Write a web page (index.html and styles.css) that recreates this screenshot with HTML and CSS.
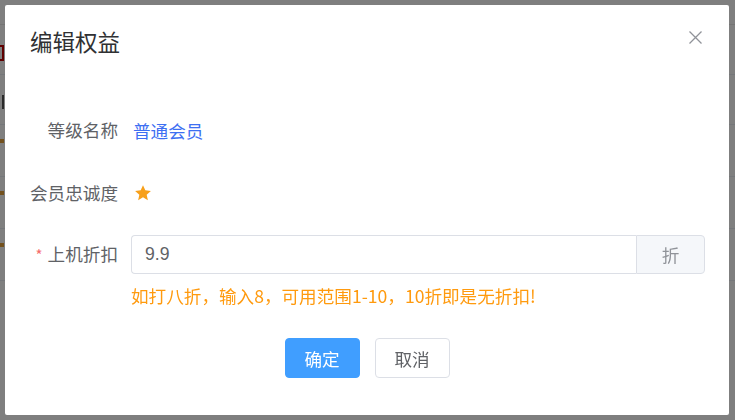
FILE: index.html
```html
<!DOCTYPE html>
<html lang="zh">
<head>
<meta charset="utf-8">
<title>编辑权益</title>
<link rel="stylesheet" href="styles.css">
</head>
<body>
<div class="page">
  <div class="page-top"></div>
  <div class="page-row"><span class="bg-frag red"></span></div>
  <div class="page-row"><span class="bg-frag dark"></span></div>
  <div class="page-row short"><span class="bg-mark"></span></div>
  <div class="page-row short"><span class="bg-mark"></span></div>
  <div class="page-row short"><span class="bg-mark"></span></div>
</div>
<div class="mask">
  <div class="dialog">
    <div class="dialog-header">
      <span class="dialog-title">编辑权益</span>
      <button class="dialog-close" aria-label="关闭">
        <svg width="13" height="13" viewBox="0 0 13 13"><path d="M0.5 0.5L12.5 12.5M12.5 0.5L0.5 12.5" stroke="#909399" stroke-width="1.3" fill="none"/></svg>
      </button>
    </div>
    <div class="dialog-body">
      <div class="form-item first">
        <label class="form-label">等级名称</label>
        <div class="form-content"><span class="level-name">普通会员</span></div>
      </div>
      <div class="form-item second">
        <label class="form-label">会员忠诚度</label>
        <div class="form-content">
          <svg class="star" width="18" height="18" viewBox="0 0 24 24"><path d="M12 1.5l3.1 6.9 7.4.8-5.6 5 1.6 7.4L12 17.8l-6.5 3.8 1.6-7.4-5.6-5 7.4-.8z" fill="#f7a01b"/></svg>
        </div>
      </div>
      <div class="form-item third">
        <label class="form-label"><span class="required">*</span>上机折扣</label>
        <div class="form-content">
          <div class="input-group">
            <input class="input" type="text" value="9.9">
            <div class="input-append">折</div>
          </div>
        </div>
      </div>
      <div class="hint">如打八折，输入8，可用范围1-10，10折即是无折扣!</div>
    </div>
    <div class="dialog-footer">
      <button class="btn btn-primary">确定</button>
      <button class="btn btn-default">取消</button>
    </div>
  </div>
</div>
</body>
</html>
```
FILE: styles.css
```css
* { box-sizing: border-box; }
html, body {
  margin: 0;
  padding: 0;
  width: 735px;
  height: 420px;
  overflow: hidden;
  font-family: "Noto Sans CJK SC", "Noto Sans", sans-serif;
}
.page {
  width: 735px;
  height: 420px;
  background: #fff;
  display: flex;
  flex-direction: column;
}
.page-top {
  height: 25px;
  background: #fff;
  border-bottom: 1px solid #e8e8e8;
}
.page-row {
  height: 50px;
  border-bottom: 1px solid #ebeef5;
  padding-top: 20px;
}
.page-row.short { height: 52px; padding-top: 14px; }
.bg-frag {
  display: block;
  width: 4px;
  height: 16px;
  border-right: 2px solid transparent;
}
.bg-frag.red { border-color: #c00000; border-top: 2px solid #c00000; border-bottom: 2px solid #c00000; }
.bg-frag.dark { border-color: #555; height: 14px; }
.bg-mark {
  display: block;
  width: 4px;
  height: 4px;
  background: #e6a23c;
}
.mask {
  position: fixed;
  inset: 0;
  background: rgba(0, 0, 0, 0.5);
  padding: 5px 6px 5px 5px;
  display: flex;
}
.dialog {
  flex: 1;
  background: #fff;
  border-radius: 2px;
  display: flex;
  flex-direction: column;
  position: relative;
}
.dialog-header {
  padding: 20px 25px 0;
  height: 58px;
}
.dialog-title {
  font-size: 22.5px;
  line-height: 33px;
  color: #303133;
}
.dialog-close {
  position: absolute;
  top: 26px;
  right: 27px;
  border: 0;
  background: none;
  padding: 0;
  width: 13px;
  height: 13px;
  cursor: pointer;
}
.dialog-close svg { display: block; }
.dialog-body {
  padding: 47px 24px 0 25px;
}
.form-item {
  display: flex;
  align-items: center;
  height: 40px;
}
.form-item.first { margin-bottom: 23px; }
.form-item.second { margin-bottom: 22px; }
.form-item.third { height: 39px; }
.form-label {
  width: 88px;
  text-align: right;
  font-size: 17.6px;
  color: #606266;
  line-height: 40px;
  flex-shrink: 0;
}
.required {
  color: #f56c6c;
  margin-right: 5px;
  font-size: 15px;
}
.form-content {
  flex: 1;
  padding-left: 13px;
  display: flex;
  align-items: center;
  min-width: 0;
}
.level-name {
  font-size: 17.6px;
  color: #3d6ff2;
  padding-left: 2px;
}
.star { display: block; margin-left: 3px; }
.input-group {
  flex: 1;
  display: flex;
  height: 39px;
}
.input {
  flex: 1;
  min-width: 0;
  height: 39px;
  border: 1px solid #dcdfe6;
  border-right: 0;
  border-radius: 4px 0 0 4px;
  padding: 0 13px;
  font-family: "Liberation Sans", Arial, sans-serif;
  font-size: 17.6px;
  color: #606266;
  outline: none;
}
.input-append {
  width: 69px;
  height: 39px;
  background: #f5f7fa;
  border: 1px solid #dcdfe6;
  border-radius: 0 4px 4px 0;
  color: #909399;
  font-size: 17.6px;
  display: flex;
  align-items: center;
  justify-content: center;
}
.hint {
  margin: 12px 0 0 101px;
  font-size: 17.6px;
  line-height: 20px;
  color: #ff9a0e;
  white-space: nowrap;
}
.dialog-footer {
  margin-top: 32px;
  display: flex;
  justify-content: center;
  gap: 15px;
}
.btn {
  width: 75px;
  height: 40px;
  border-radius: 4px;
  font-family: "Noto Sans CJK SC", sans-serif;
  font-size: 17.6px;
  padding: 0;
  cursor: pointer;
}
.btn-primary {
  background: #409eff;
  border: 1px solid #409eff;
  color: #fff;
}
.btn-default {
  background: #fff;
  border: 1px solid #dcdfe6;
  color: #606266;
}
```
